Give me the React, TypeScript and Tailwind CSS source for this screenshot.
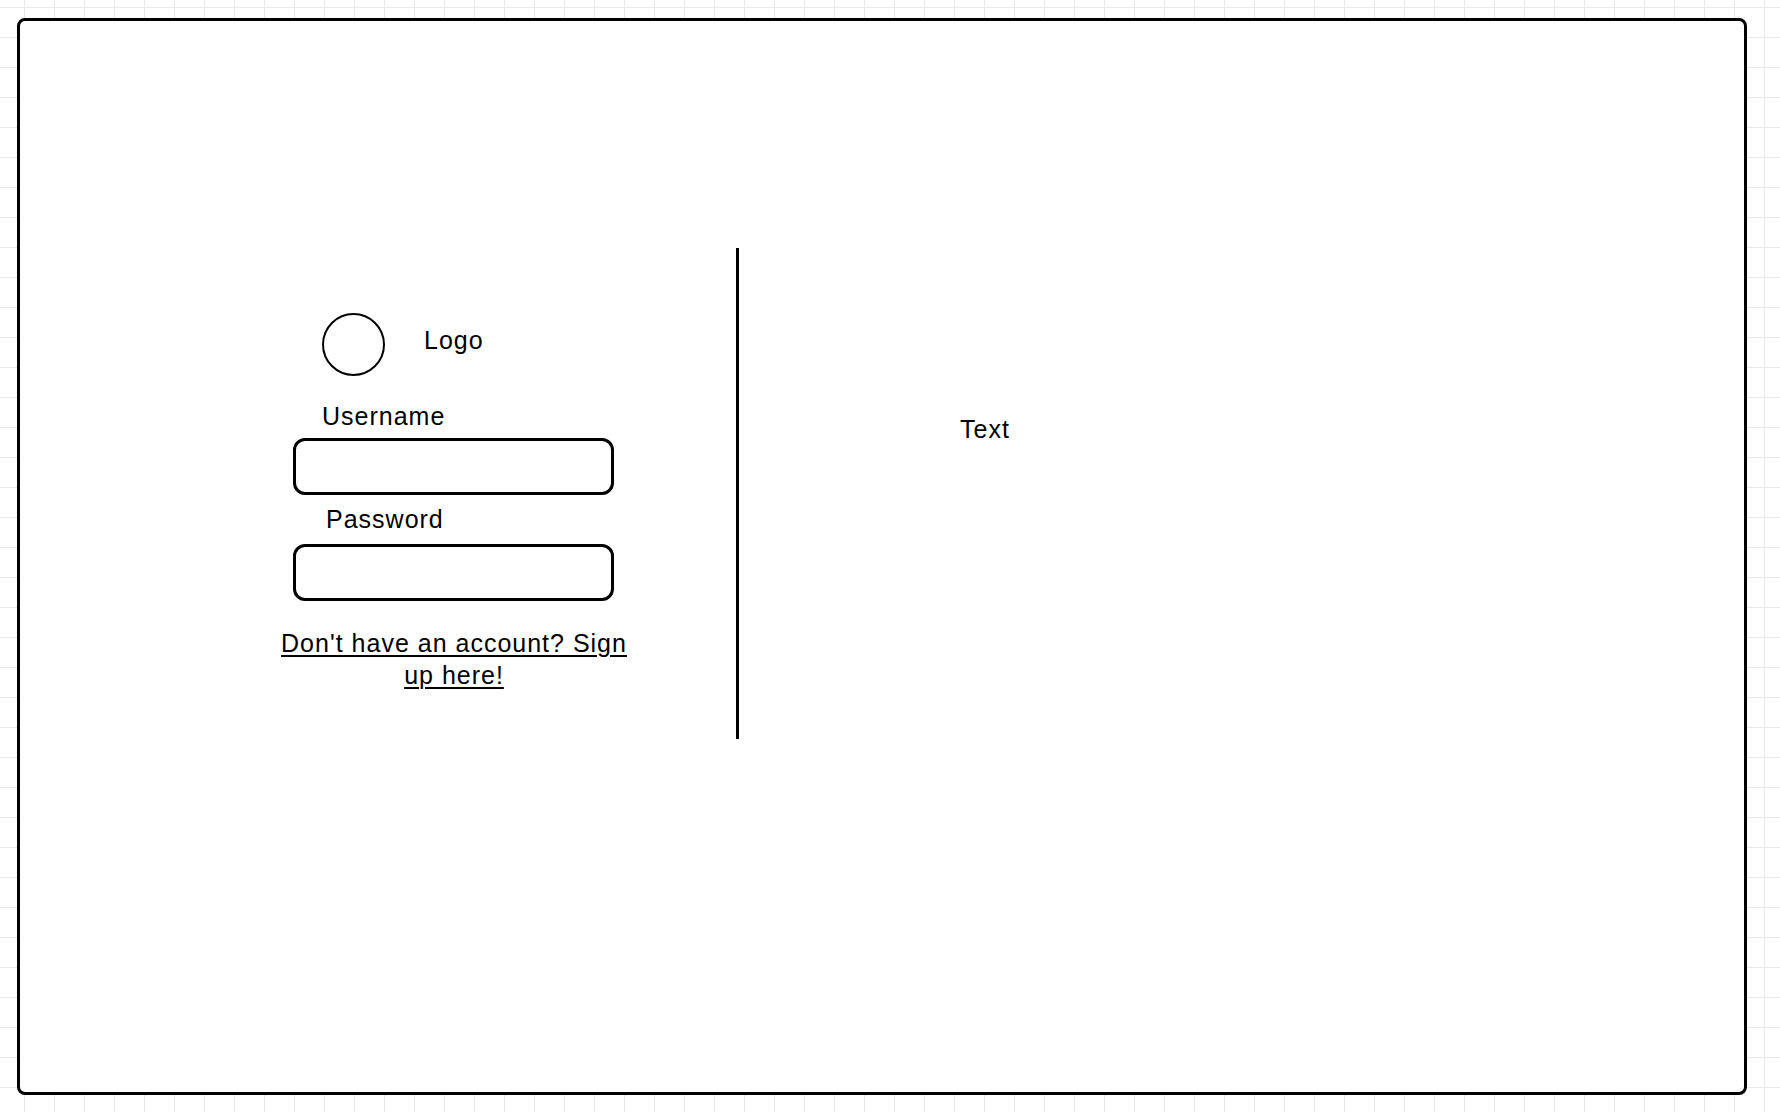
import React from "react";

export default function App() {
  return (
    <div
      className="w-[1780px] h-[1112px] overflow-hidden bg-white bg-[linear-gradient(to_right,#e9e9e9_1px,transparent_1px),linear-gradient(to_bottom,#e9e9e9_1px,transparent_1px)] bg-size-[30px_30px] bg-position-[24px_7px] pt-[18px] pl-[17px]"
      style={{ fontFamily: '"Liberation Sans", Arial, sans-serif' }}
    >
      <div className="w-[1730px] h-[1077px] bg-white border-[3px] border-black rounded-[8px] flex items-start text-black text-[25px] leading-[28px] tracking-[1px]">
        {/* Left: login form */}
        <div className="ml-[254px] mt-[292px] w-[360px] flex flex-col items-start">
          <div className="flex items-start ml-[48px]">
            <div className="w-[63px] h-[63px] rounded-full border-[2.5px] border-black" />
            <span className="ml-[39px] mt-[13px]">Logo</span>
          </div>
          <label className="ml-[48px] mt-[26px]">Username</label>
          <div className="ml-[19px] mt-[8px] w-[321px] h-[57px] border-[3px] border-black rounded-[12px]" />
          <label className="ml-[52px] mt-[10px]">Password</label>
          <div className="ml-[19px] mt-[11px] w-[321px] h-[57px] border-[3px] border-black rounded-[12px]" />
          <a className="mt-[26px] w-full text-center leading-[32px] underline underline-offset-[3px] decoration-[2px]">
            Don't have an account? Sign up here!
          </a>
        </div>

        {/* Divider */}
        <div className="ml-[102px] mt-[227px] w-[3px] h-[491px] bg-black" />

        {/* Right */}
        <div className="ml-[221px] mt-[394px]">Text</div>
      </div>
    </div>
  );
}
